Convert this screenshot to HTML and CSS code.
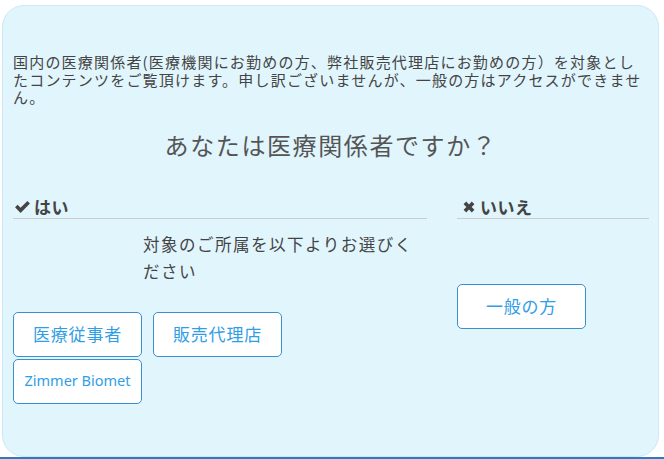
FILE: index.html
```
<!DOCTYPE html>
<html lang="ja">
<head>
    <meta charset="UTF-8">
    <title>医療関係者確認</title>
    <link rel="stylesheet" href="styles.css">
</head>
<body>

<div class="modal">
    <p class="intro">国内の医療関係者(医療機関にお勤めの方、弊社販売代理店にお勤めの方）を対象としたコンテンツをご覧頂けます。申し訳ございませんが、一般の方はアクセスができません。</p>

    <h2 class="question">あなたは医療関係者ですか？</h2>

    <div class="answers">
        <div class="col yes">
            <h3 class="col-title">
                <svg class="icon" viewBox="0 0 16 16" width="17" height="17"><path d="M1 8.8 L3.4 6.4 L6.2 9.2 L12.6 2.8 L15 5.2 L6.2 14 Z" fill="#444"/></svg>はい
            </h3>
            <p class="note">対象のご所属を以下よりお選びください</p>
            <div class="btns">
                <button class="btn">医療従事者</button>
                <button class="btn">販売代理店</button>
                <button class="btn latin">Zimmer Biomet</button>
            </div>
        </div>
        <div class="col no">
            <h3 class="col-title">
                <svg class="icon" viewBox="0 0 16 16" width="16" height="16"><path d="M2.6 5.2 L5.2 2.6 L8 5.4 L10.8 2.6 L13.4 5.2 L10.6 8 L13.4 10.8 L10.8 13.4 L8 10.6 L5.2 13.4 L2.6 10.8 L5.4 8 Z" fill="#444"/></svg>いいえ
            </h3>
            <div class="btns">
                <button class="btn">一般の方</button>
            </div>
        </div>
    </div>
</div>
<div class="bottom-bar"></div>

</body>
</html>
```

FILE: styles.css
```
body {
    margin: 0;
    background: #ffffff;
    font-family: "Noto Sans CJK JP", "Noto Sans", sans-serif;
    color: #444;
    overflow: hidden;
}
.modal {
    box-sizing: border-box;
    height: 452px;
    margin: 5px 5px 0 2px;
    padding: 47px 9px 0 10px;
    background: #e1f5fd;
    border: 1px solid #cde8f8;
    border-radius: 22px;
}
.intro {
    margin: 0;
    font-size: 15px;
    line-height: 17.5px;
    letter-spacing: 1.2px;
    color: #444;
}
.question {
    margin: 24px 0 0;
    text-align: center;
    font-size: 24px;
    line-height: 30px;
    font-weight: normal;
    letter-spacing: 1.6px;
    color: #555;
}
.answers {
    display: grid;
    grid-template-columns: 414px 1fr;
    gap: 30px;
    margin-top: 37px;
}
.col-title {
    display: flex;
    align-items: center;
    gap: 3px;
    margin: 0;
    padding-bottom: 1px;
    font-size: 17px;
    line-height: 20px;
    letter-spacing: 0.5px;
    font-weight: bold;
    color: #444;
    border-bottom: 1px solid #cccccc;
}
.yes .col-title {
    padding-left: 1px;
}
.no .col-title {
    padding-left: 4px;
}
.icon {
    flex-shrink: 0;
}
.note {
    margin: 12px 0 0 130px;
    font-size: 16.5px;
    line-height: 27px;
    letter-spacing: 1.5px;
    color: #444;
}
.yes .btns {
    display: grid;
    grid-template-columns: 129px 129px;
    column-gap: 11px;
    row-gap: 2px;
    margin-top: 27px;
}
.no .btns {
    margin-top: 65px;
}
.btn {
    box-sizing: border-box;
    width: 129px;
    height: 45px;
    padding: 0 0 2px;
    background: #ffffff;
    border: 1px solid #3a8fd0;
    border-radius: 5px;
    color: #2f9ee6;
    font-family: "Noto Sans CJK JP", "Noto Sans", sans-serif;
    font-size: 17px;
    letter-spacing: 0.8px;
    cursor: pointer;
}
.btn.latin {
    font-family: "Noto Sans", sans-serif;
    font-size: 14.5px;
    letter-spacing: 0;
}
.bottom-bar {
    height: 3px;
    background: #2a7bc4;
}
```
